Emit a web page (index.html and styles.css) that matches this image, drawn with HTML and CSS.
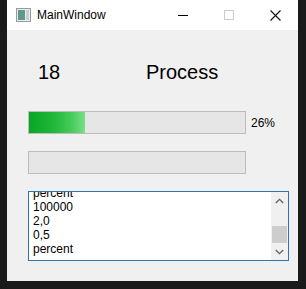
FILE: index.html
```html
<!DOCTYPE html>
<html>
<head>
<meta charset="utf-8">
<link rel="stylesheet" href="styles.css">
</head>
<body>
<div class="window">
  <div class="titlebar">
    <svg class="app-icon" width="15" height="14" viewBox="0 0 15 14">
      <rect x="0.5" y="0.5" width="14" height="13" fill="#e8ecec" stroke="#9a9a9a"/>
      <rect x="2" y="2" width="7" height="10" fill="#5f9a92"/>
      <rect x="10" y="2" width="3" height="10" fill="#c9d0d0"/>
    </svg>
    <span class="title">MainWindow</span>
    <div class="caption">
      <div class="cap-btn">
        <svg width="10" height="10" viewBox="0 0 10 10"><line x1="0" y1="5.5" x2="10" y2="5.5" stroke="#000" stroke-width="1"/></svg>
      </div>
      <div class="cap-btn">
        <svg width="10" height="10" viewBox="0 0 10 10"><rect x="0.5" y="0.5" width="9" height="9" fill="none" stroke="#cccccc" stroke-width="1"/></svg>
      </div>
      <div class="cap-btn">
        <svg width="11" height="11" viewBox="0 0 11 11"><path d="M0.5 0.5 L10.5 10.5 M10.5 0.5 L0.5 10.5" stroke="#111" stroke-width="1.1" fill="none"/></svg>
      </div>
    </div>
  </div>
  <div class="client">
    <div class="labels">
      <span class="num">18</span>
      <span class="proc">Process</span>
    </div>
    <div class="bar-row first">
      <div class="bar"><div class="fill" style="width:26%"></div></div>
      <span class="pct">26%</span>
    </div>
    <div class="bar-row second">
      <div class="bar"></div>
    </div>
    <div class="textbox">
      <div class="viewport">
        <div class="lines">
          <div>percent</div>
          <div>100000</div>
          <div>2,0</div>
          <div>0,5</div>
          <div>percent</div>
        </div>
      </div>
      <div class="scrollbar">
        <div class="sb-btn">
          <svg width="9" height="6" viewBox="0 0 9 6"><path d="M0.8 5 L4.5 1.3 L8.2 5" stroke="#606060" stroke-width="1.3" fill="none"/></svg>
        </div>
        <div class="sb-track"><div class="sb-thumb"></div></div>
        <div class="sb-btn">
          <svg width="9" height="6" viewBox="0 0 9 6"><path d="M0.8 1 L4.5 4.7 L8.2 1" stroke="#606060" stroke-width="1.3" fill="none"/></svg>
        </div>
      </div>
    </div>
  </div>
</div>
</body>
</html>
```

FILE: styles.css
```css
html, body {
  margin: 0;
  padding: 0;
}
body {
  width: 306px;
  height: 289px;
  background: #1a1a1a;
  overflow: hidden;
  font-family: "Liberation Sans", Arial, sans-serif;
  color: #000;
}
.window {
  margin-left: 7px;
  width: 291px;
  height: 281px;
  background: #f0f0f0;
  display: flex;
  flex-direction: column;
}
.titlebar {
  height: 30px;
  background: #ffffff;
  display: flex;
  align-items: center;
  padding-left: 9px;
}
.app-icon {
  display: block;
  flex: none;
}
.title {
  margin-left: 6px;
  font-size: 12px;
  line-height: 14px;
  color: #000;
}
.caption {
  margin-left: auto;
  display: flex;
  height: 30px;
}
.cap-btn {
  width: 46px;
  height: 30px;
  display: flex;
  align-items: center;
  justify-content: center;
}
.cap-btn svg {
  display: block;
}
.client {
  padding-left: 21px;
  display: flex;
  flex-direction: column;
}
.labels {
  margin-top: 30px;
  padding-left: 10px;
  display: flex;
  font-size: 20px;
  line-height: 24px;
  height: 24px;
}
.num {
  width: 108px;
}
.bar-row {
  display: flex;
  align-items: center;
  height: 23px;
}
.bar-row.first {
  margin-top: 27px;
}
.bar-row.second {
  margin-top: 17px;
}
.bar {
  box-sizing: border-box;
  width: 218px;
  height: 23px;
  border: 1px solid #bcbcbc;
  background: #e6e6e6;
  display: flex;
}
.fill {
  height: 100%;
  background: linear-gradient(to right, #0aa524 0%, #22b83a 45%, #45ca5a 75%, #79df87 100%);
}
.pct {
  margin-left: 5px;
  font-size: 12px;
  line-height: 14px;
}
.textbox {
  margin-top: 17px;
  box-sizing: border-box;
  width: 261px;
  height: 70px;
  border: 1px solid #2f73b0;
  background: #fff;
  display: flex;
}
.viewport {
  flex: 1;
  overflow: hidden;
  padding-left: 4px;
}
.lines {
  margin-top: -6px;
  font-size: 12px;
  line-height: 14px;
}
.scrollbar {
  width: 17px;
  background: #f0f0f0;
  display: flex;
  flex-direction: column;
}
.sb-btn {
  height: 17px;
  display: flex;
  align-items: center;
  justify-content: center;
}
.sb-btn svg {
  display: block;
}
.sb-track {
  flex: 1;
  display: flex;
  flex-direction: column;
  justify-content: flex-end;
}
.sb-thumb {
  height: 17px;
  margin: 0 1px;
  background: #cdcdcd;
}
```
